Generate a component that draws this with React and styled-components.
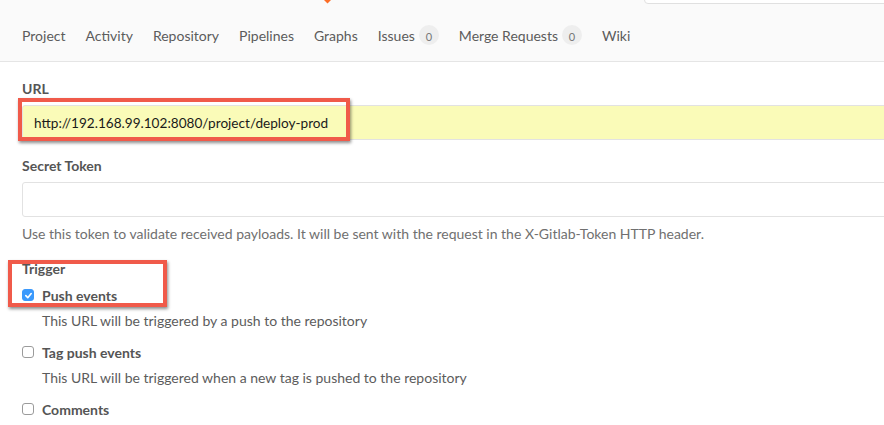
import styled, { createGlobalStyle } from "styled-components"

const GlobalStyle = createGlobalStyle`
    body{
        margin: 0;
        background: #fff;
        font-family: "Lato", "Liberation Sans", sans-serif;
        color: #555;
    }
`

const tabs = [
    { name: "Project" },
    { name: "Activity" },
    { name: "Repository" },
    { name: "Pipelines" },
    { name: "Graphs" },
    { name: "Issues", count: 0 },
    { name: "Merge Requests", count: 0 },
    { name: "Wiki" },
]

const triggers = [
    { name: "Push events", help: "This URL will be triggered by a push to the repository", checked: true },
    { name: "Tag push events", help: "This URL will be triggered when a new tag is pushed to the repository" },
    { name: "Comments" },
]

function Check({ checked }) {
    return (
        <CheckBox checked={checked}>
            {checked &&
                <svg width="9" height="9" viewBox="0 0 10 10">
                    <path d="M2 5.2 L4.2 7.4 L8 2.8" fill="none" stroke="#fff" strokeWidth="1.8" strokeLinecap="round" strokeLinejoin="round" />
                </svg>
            }
        </CheckBox>
    )
}

export default function App() {
    return (
        <>
            <GlobalStyle />
            <Header>
                <TopRow>
                    <Logo>
                        <svg width="7" height="4" viewBox="0 0 7 4">
                            <path d="M0 0 L7 0 L3.5 3.5 Z" fill="#fc6d26" />
                        </svg>
                    </Logo>
                    <SearchBox />
                </TopRow>
                <Nav>
                    {tabs.map(t => (
                        <Tab key={t.name}>
                            {t.name}
                            {t.count !== undefined && <Badge>{t.count}</Badge>}
                        </Tab>
                    ))}
                </Nav>
            </Header>
            <Form>
                <Group>
                    <Label>URL</Label>
                    <Marked>
                        <Input filled value="http://192.168.99.102:8080/project/deploy-prod" readOnly />
                        <Highlight variant="url" />
                    </Marked>
                </Group>
                <Group>
                    <Label>Secret Token</Label>
                    <Input value="" readOnly />
                    <Help>Use this token to validate received payloads. It will be sent with the request in the X-Gitlab-Token HTTP header.</Help>
                </Group>
                <Marked>
                    <Label>Trigger</Label>
                    <TriggerList>
                        {triggers.map(t => (
                            <Trigger key={t.name}>
                                <CheckRow>
                                    <Check checked={t.checked} />
                                    <CheckName>{t.name}</CheckName>
                                </CheckRow>
                                {t.help && <TriggerHelp>{t.help}</TriggerHelp>}
                            </Trigger>
                        ))}
                    </TriggerList>
                    <Highlight variant="trigger" />
                </Marked>
            </Form>
        </>
    )
}

const Header = styled.div`
    background: #fafafa;
    border-bottom: 1px solid #e5e5e5;
    height: 62px;
    box-sizing: border-box;
`

const TopRow = styled.div`
    height: 4px;
    overflow: hidden;
    display: flex;
    align-items: flex-end;
`

const Logo = styled.div`
    margin-left: 324px;
    display: flex;
    align-items: flex-start;
    height: 4px;
    >svg{ display: block; }
`

const SearchBox = styled.div`
    margin-left: auto;
    width: 250px;
    height: 30px;
    flex-shrink: 0;
    background: #fff;
    border: 1px solid #e0e0e0;
    border-radius: 4px;
    box-sizing: border-box;
    margin-right: -10px;
`

const Nav = styled.div`
    display: flex;
    align-items: center;
    gap: 20px;
    padding-left: 22px;
    height: 58px;
    padding-top: 4px;
    box-sizing: border-box;
`

const Tab = styled.div`
    display: flex;
    align-items: center;
    font-size: 14px;
    color: #5c5c5c;
    white-space: nowrap;
`

const Badge = styled.span`
    display: inline-flex;
    align-items: center;
    justify-content: center;
    margin-left: 4px;
    min-width: 20px;
    height: 20px;
    padding: 2px 4px 0;
    box-sizing: border-box;
    border-radius: 10px;
    background: #eee;
    color: #777;
    font-size: 11px;
`

const Form = styled.div`
    padding: 17px 0 0 22px;
    display: flex;
    flex-direction: column;
`

const Group = styled.div`
    display: flex;
    flex-direction: column;
    margin-bottom: 16px;
`

const Label = styled.div`
    font-size: 14px;
    font-weight: 700;
    color: #555;
    line-height: 20px;
    margin-bottom: 6px;
`

const Marked = styled.div`
    position: relative;
`

const Input = styled.input`
    display: block;
    width: calc(100% + 20px);
    height: 35px;
    box-sizing: border-box;
    border: 1px solid #e2e2e2;
    border-radius: 3px;
    background: ${props => props.filled ? "#fafbb8" : "#fff"};
    font-family: "Lato", "Liberation Sans", sans-serif;
    font-size: 13.6px;
    color: #1a1a1a;
    padding: 0 11px;
    outline: none;
`

const Highlight = styled.div`
    position: absolute;
    border: 4px solid #f05a4a;
    box-shadow: 1px 2px 3px rgba(0, 0, 0, 0.45);
    pointer-events: none;
    ${props => props.variant === "url" ? `
        left: -4px;
        top: -7px;
        width: 324px;
        height: 35px;
    ` : `
        left: -14px;
        top: 1px;
        width: 151px;
        height: 39px;
    `}
`

const Help = styled.div`
    font-size: 14px;
    color: #707070;
    margin-top: 8px;
    line-height: 18px;
`

const TriggerList = styled.div`
    display: flex;
    flex-direction: column;
    gap: 12px;
`

const Trigger = styled.div`
    display: flex;
    flex-direction: column;
`

const CheckRow = styled.div`
    display: flex;
    align-items: center;
    height: 20px;
`

const CheckBox = styled.span`
    width: 12px;
    height: 12px;
    box-sizing: border-box;
    border-radius: 3px;
    margin-right: 8px;
    display: inline-flex;
    align-items: center;
    justify-content: center;
    background: ${props => props.checked ? "#3b99fc" : "#fff"};
    border: 1px solid ${props => props.checked ? "#3b99fc" : "#9b9b9b"};
`

const CheckName = styled.span`
    font-size: 14px;
    font-weight: 700;
    color: #555;
`

const TriggerHelp = styled.div`
    font-size: 14px;
    color: #5c5c5c;
    padding-left: 20px;
    margin-top: 7px;
    line-height: 18px;
`
